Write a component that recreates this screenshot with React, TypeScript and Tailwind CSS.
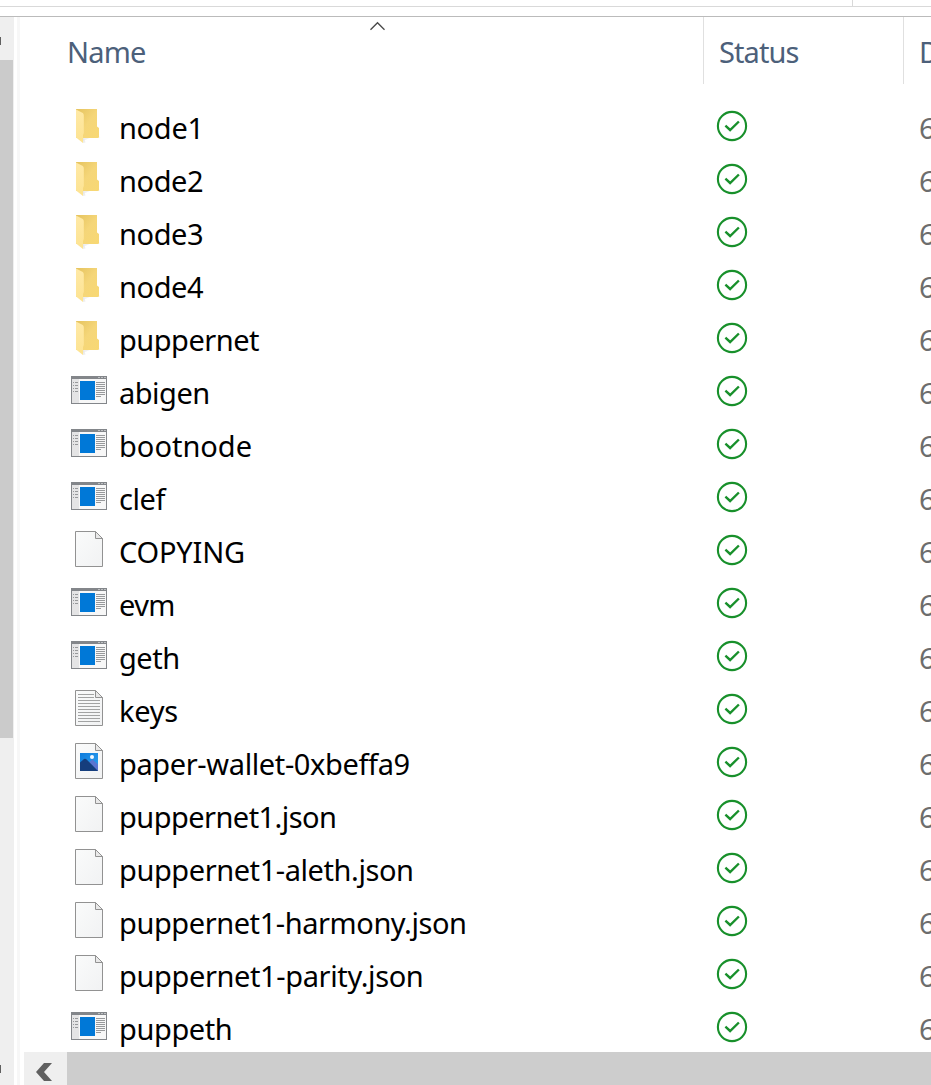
type Kind = 'folder' | 'app' | 'doc' | 'text' | 'image';

const files: { name: string; kind: Kind; tracking: string }[] = [
  { name: 'node1', kind: 'folder', tracking: 'tracking-[-0.3px]' },
  { name: 'node2', kind: 'folder', tracking: 'tracking-[-0.4px]' },
  { name: 'node3', kind: 'folder', tracking: 'tracking-[-0.4px]' },
  { name: 'node4', kind: 'folder', tracking: 'tracking-[-0.4px]' },
  { name: 'puppernet', kind: 'folder', tracking: 'tracking-[-0.5px]' },
  { name: 'abigen', kind: 'app', tracking: 'tracking-[-0.5px]' },
  { name: 'bootnode', kind: 'app', tracking: 'tracking-[0px]' },
  { name: 'clef', kind: 'app', tracking: 'tracking-[-0.4px]' },
  { name: 'COPYING', kind: 'doc', tracking: 'tracking-[-0.2px]' },
  { name: 'evm', kind: 'app', tracking: 'tracking-[-0.6px]' },
  { name: 'geth', kind: 'app', tracking: 'tracking-[-0.5px]' },
  { name: 'keys', kind: 'text', tracking: 'tracking-[-0.3px]' },
  { name: 'paper-wallet-0xbeffa9', kind: 'image', tracking: 'tracking-[-0.38px]' },
  { name: 'puppernet1.json', kind: 'doc', tracking: 'tracking-[-0.55px]' },
  { name: 'puppernet1-aleth.json', kind: 'doc', tracking: 'tracking-[-0.43px]' },
  { name: 'puppernet1-harmony.json', kind: 'doc', tracking: 'tracking-[-0.43px]' },
  { name: 'puppernet1-parity.json', kind: 'doc', tracking: 'tracking-[-0.38px]' },
  { name: 'puppeth', kind: 'app', tracking: 'tracking-[-0.4px]' },
];

function FolderIcon() {
  return (
    <>
      <defs>
        <linearGradient id="fback" x1="0" y1="0" x2="1" y2="1">
          <stop offset="0" stopColor="#e5c35e" />
          <stop offset="0.5" stopColor="#f5d679" />
          <stop offset="1" stopColor="#f8d873" />
        </linearGradient>
        <linearGradient id="ffront" x1="0" y1="0" x2="0" y2="1">
          <stop offset="0" stopColor="#ffe9a6" />
          <stop offset="1" stopColor="#fde391" />
        </linearGradient>
      </defs>
      <path d="M12 37 L27 38 L31 37 L24 36 L13 41 Z" fill="#000" opacity="0.06" />
      <path d="M6 9 H27 V26.5 L29 28 V37.5 L27.5 38 H6 Z" fill="url(#fback)" />
      <path d="M6 9.5 L12.8 13 Q13.8 13.8 13.8 15.5 V33 L13 35 V43 L6 37.5 Z" fill="url(#ffront)" />
      <path d="M13 38 L14 38.5 L15.5 42.5 L13 43 Z" fill="#ddd" opacity="0.5" />
    </>
  );
}

function AppIcon() {
  return (
    <g shapeRendering="crispEdges">
      <rect x="1" y="11" width="36" height="28" fill="#83868a" />
      <rect x="2" y="14" width="34" height="24" fill="#f7f7f7" />
      <rect x="2" y="14" width="7" height="24" fill="#e4e4e5" />
      <rect x="28" y="12" width="2" height="1" fill="#bfc1c3" />
      <rect x="31" y="12" width="2" height="1" fill="#bfc1c3" />
      <rect x="34" y="12" width="2" height="1" fill="#bfc1c3" />
      {[17, 20, 23, 26].map((y) => (
        <g key={y} fill="#97999b">
          <rect x="3" y={y} width="1" height="1" />
          <rect x="5" y={y} width="3" height="1" />
        </g>
      ))}
      <rect x="10" y="16" width="15" height="19" fill="#0078d7" />
      {[17, 19, 21, 23, 25, 27, 29].map((y) => (
        <rect key={y} x="26" y={y} width="9" height="1" fill="#97999b" />
      ))}
      <rect x="26" y="31" width="5" height="1" fill="#97999b" />
    </g>
  );
}

function PageIcon({ kind }: { kind: Kind }) {
  return (
    <>
      <defs>
        <linearGradient id="page" x1="0" y1="0" x2="1" y2="1">
          <stop offset="0" stopColor="#fafbfb" />
          <stop offset="1" stopColor="#f1f2f3" />
        </linearGradient>
        <linearGradient id="sky" x1="0" y1="0" x2="1" y2="1">
          <stop offset="0" stopColor="#0d7bdc" />
          <stop offset="1" stopColor="#30a2f0" />
        </linearGradient>
      </defs>
      <path d="M5.5 7.5 H25.5 L32.5 14.5 V42.5 H5.5 Z" fill="url(#page)" stroke="#929292" />
      <path d="M25.5 7.5 V14.5 H32.5 Z" fill="#e9e9e9" stroke="#929292" />
      {kind === 'text' && (
        <g fill="#a2a3a3" shapeRendering="crispEdges">
          <rect x="8" y="11" width="16" height="1" />
          <rect x="8" y="14" width="16" height="1" />
          {[17, 20, 23, 26, 29, 32, 35, 38].map((y) => (
            <rect key={y} x="8" y={y} width="22" height="1" />
          ))}
        </g>
      )}
      {kind === 'image' && (
        <>
          <rect x="10" y="17" width="18" height="18" fill="url(#sky)" />
          <path d="M17 28 L22.5 23.5 L28 28.5 V35 H17 Z" fill="#5b74d0" />
          <path d="M10 26.5 L14 23 Q15.2 22.2 16.4 23.2 L28 35 H10 Z" fill="#153e7d" />
          <circle cx="22" cy="21" r="2" fill="#f5faff" />
        </>
      )}
    </>
  );
}

function FileIcon({ kind }: { kind: Kind }) {
  return (
    <svg width="49" height="53" viewBox="0 0 49 53" className="shrink-0">
      {kind === 'folder' ? <FolderIcon /> : kind === 'app' ? <AppIcon /> : <PageIcon kind={kind} />}
    </svg>
  );
}

function SyncedIcon() {
  return (
    <svg width="32" height="32" viewBox="0 0 32 32" fill="none" stroke="#18902b">
      <circle cx="16" cy="16" r="14.1" strokeWidth="2.1" />
      <path d="M9.4 15.7 L14.1 20 L22.9 11.5" strokeWidth="2.4" />
    </svg>
  );
}

export default function App() {
  return (
    <div className="flex h-[1085px] w-[931px] flex-col overflow-hidden bg-white font-['Noto_Sans','Open_Sans',sans-serif] text-[29px] whitespace-nowrap text-black">
      <div className="flex h-[7px] shrink-0 border-b border-[#d9d9d9]">
        <div className="w-[853px] border-r border-[#d9d9d9]" />
      </div>
      <div className="h-[10px] shrink-0 border-b border-[#bbbbbb]" />
      <div className="flex min-h-0 flex-1">
        <div className="flex w-[14px] shrink-0 flex-col bg-[#efefef]">
          <div className="mt-5 h-2 w-px bg-[#606060]" />
          <div className="mt-[15px] h-[678px] w-[13px] bg-[#cbcbcb]" />
          <div className="mt-[327px] h-2 w-px bg-[#606060]" />
        </div>
        <div className="ml-[3px] w-[3px] shrink-0 bg-[#f7f7f7]" />
        <div className="flex min-w-0 flex-1 flex-col">
          <div className="relative flex h-[67px] shrink-0 leading-[70px] text-[#4c607a]">
            <div className="w-[684px] shrink-0 border-r border-[#e0e0e0] pl-[47px]">
              <span className="tracking-[-0.8px]">Name</span>
            </div>
            <div className="w-[200px] shrink-0 border-r border-[#e0e0e0] pl-[15px]">
              <span className="tracking-[-0.9px]">Status</span>
            </div>
            <div className="shrink-0 pl-[15px]">D</div>
            <svg className="absolute top-[4px] left-[349px]" width="18" height="12" viewBox="0 0 18 12" fill="none" stroke="#484848" strokeWidth="1.3">
              <path d="M1.5 8.7 L8.5 1.7 L15.5 8.7" />
            </svg>
          </div>
          <div className="mt-4 min-h-0 flex-1 overflow-hidden">
            {files.map((f) => (
              <div key={f.name} className="flex h-[53px] items-center pl-[50px]">
                <FileIcon kind={f.kind} />
                <div className="w-[597px] shrink-0 pt-[2px] leading-[53px]">
                  <span className={f.tracking}>{f.name}</span>
                </div>
                <div className="w-[203px] shrink-0 pb-[2px]">
                  <SyncedIcon />
                </div>
                <div className="shrink-0 pt-[2px] leading-[53px] text-[#6d6d6d]">6</div>
              </div>
            ))}
          </div>
          <div className="ml-1 flex h-[33px] shrink-0 bg-[#cdcdcd]">
            <div className="w-[43px] bg-[#efefef]">
              <svg width="43" height="33" viewBox="0 0 43 33">
                <path d="M20 11 H28 L20 20 L28 29 H20 L12 20 Z" fill="#606060" />
              </svg>
            </div>
          </div>
        </div>
      </div>
    </div>
  );
}
